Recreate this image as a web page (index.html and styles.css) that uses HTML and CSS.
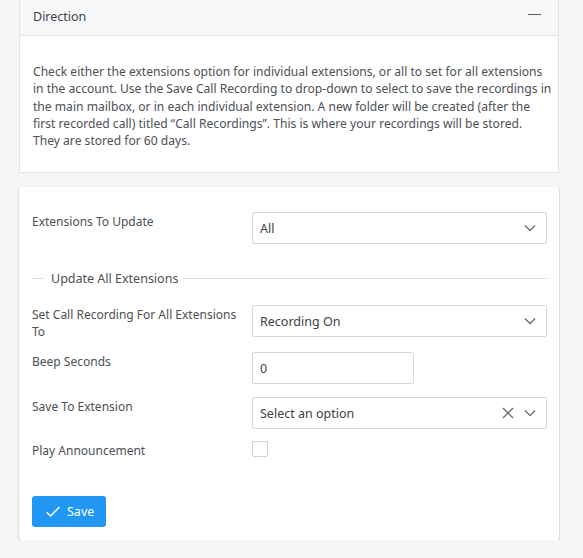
FILE: index.html
```html
<!DOCTYPE html>
<html>
<head>
<meta charset="utf-8">
<link rel="stylesheet" href="styles.css">
</head>
<body>
<div class="page">
  <section class="card info">
    <div class="card-head">
      <span class="card-title">Direction</span>
      <span class="collapse"></span>
    </div>
    <div class="card-body">
      <p>Check either the extensions option for individual extensions, or all to set for all extensions in the account. Use the Save Call Recording to drop-down to select to save the recordings in the main mailbox, or in each individual extension. A new folder will be created (after the first recorded call) titled “Call Recordings”. This is where your recordings will be stored. They are stored for 60 days.</p>
    </div>
  </section>

  <section class="card form">
    <div class="row first">
      <label class="lbl">Extensions To Update</label>
      <div class="select">
        <span class="value">All</span>
        <svg class="chev" width="12" height="8" viewBox="0 0 12 8"><path d="M1 1.5 L6 6.5 L11 1.5" fill="none" stroke="#6b6b6b" stroke-width="1.3"/></svg>
      </div>
    </div>

    <div class="divider"><span>Update All Extensions</span></div>

    <div class="row r2">
      <label class="lbl">Set Call Recording For All Extensions To</label>
      <div class="select">
        <span class="value">Recording On</span>
        <svg class="chev" width="12" height="8" viewBox="0 0 12 8"><path d="M1 1.5 L6 6.5 L11 1.5" fill="none" stroke="#6b6b6b" stroke-width="1.3"/></svg>
      </div>
    </div>

    <div class="row r3">
      <label class="lbl">Beep Seconds</label>
      <div class="input"><span class="value">0</span></div>
    </div>

    <div class="row r4">
      <label class="lbl">Save To Extension</label>
      <div class="select">
        <span class="value">Select an option</span>
        <svg class="clear" width="12" height="12" viewBox="0 0 12 12"><path d="M1 1 L11 11 M11 1 L1 11" fill="none" stroke="#6b6b6b" stroke-width="1.3"/></svg>
        <svg class="chev" width="12" height="8" viewBox="0 0 12 8"><path d="M1 1.5 L6 6.5 L11 1.5" fill="none" stroke="#6b6b6b" stroke-width="1.3"/></svg>
      </div>
    </div>

    <div class="row r5">
      <label class="lbl">Play Announcement</label>
      <div class="check-wrap"><span class="checkbox"></span></div>
    </div>

    <div class="actions">
      <button class="btn">
        <svg width="16" height="12" viewBox="0 0 16 12"><path d="M1.5 6 L5.5 10 L14.5 1" fill="none" stroke="#fff" stroke-width="1.5"/></svg>
        <span>Save</span>
      </button>
    </div>
  </section>
</div>
</body>
</html>
```

FILE: styles.css
```css
html, body {
  margin: 0;
  padding: 0;
  background: #f5f6f8;
  font-family: "Noto Sans", "Open Sans", sans-serif;
  font-size: 12px;
  color: #4d5055;
}

.page {
  width: 540px;
  margin-left: 19px;
  display: flex;
  flex-direction: column;
  gap: 14px;
}

.card {
  background: #fff;
  box-sizing: border-box;
}

.info {
  border: 1px solid #e2e4e7;
  border-top: none;
}

.card-head {
  height: 36px;
  background: #f7f8fa;
  border-bottom: 1px solid #e2e4e7;
  display: flex;
  align-items: center;
  justify-content: space-between;
  padding: 0 17px 0 13px;
  box-sizing: border-box;
}

.card-title {
  font-size: 12.5px;
  color: #3f4247;
  margin-top: -2px;
}

.collapse {
  width: 13px;
  height: 1.5px;
  background: #5c6066;
  margin-top: -6px;
}

.card-body {
  padding: 27px 6px 23px 13px;
}

.card-body p {
  margin: 0;
  line-height: 17.3px;
  font-size: 12.1px;
}

.form {
  padding: 25px 12px 13px 13px;
  box-shadow: 0 1px 2px rgba(0,0,0,0.35);
  border-radius: 2px;
}

.row {
  display: grid;
  grid-template-columns: 220px 1fr;
  align-items: start;
}

.lbl {
  line-height: 17px;
  padding-top: 1px;
  padding-right: 8px;
}

.select, .input {
  height: 32px;
  border: 1px solid #d5d7da;
  box-sizing: border-box;
  display: flex;
  align-items: center;
  padding: 0 10px 0 7px;
  border-radius: 2px;
  font-size: 12.5px;
  color: #3f4247;
}

.select .value { flex: 1; margin-top: 1px; }
.input .value { margin-top: 1px; }

.clear { margin-right: 10px; }

.input {
  width: 162px;
}

.divider {
  display: flex;
  align-items: center;
  margin: 26px 0 18px 0;
  font-size: 12.5px;
}
.divider::before {
  content: "";
  width: 12px;
  border-top: 1px solid #dcdee1;
  margin-right: 7px;
}
.divider::after {
  content: "";
  flex: 1;
  border-top: 1px solid #dcdee1;
  margin-left: 5px;
}

.r3 { margin-top: 12px; }
.r4 { margin-top: 13px; }
.r5 { margin-top: 12px; }

.check-wrap { height: 17px; }
.checkbox {
  display: block;
  width: 16px;
  height: 16px;
  border: 1px solid #cfd2d6;
  border-radius: 2px;
  box-sizing: border-box;
}

.actions {
  margin-top: 37px;
}

.btn {
  display: inline-flex;
  align-items: center;
  gap: 6px;
  height: 31px;
  width: 74px;
  padding: 0 0 0 13px;
  background: #2196f3;
  color: #fff;
  border: none;
  border-radius: 3px;
  font-family: "Noto Sans", "Open Sans", sans-serif;
  font-size: 12.5px;
  box-sizing: border-box;
}
```
